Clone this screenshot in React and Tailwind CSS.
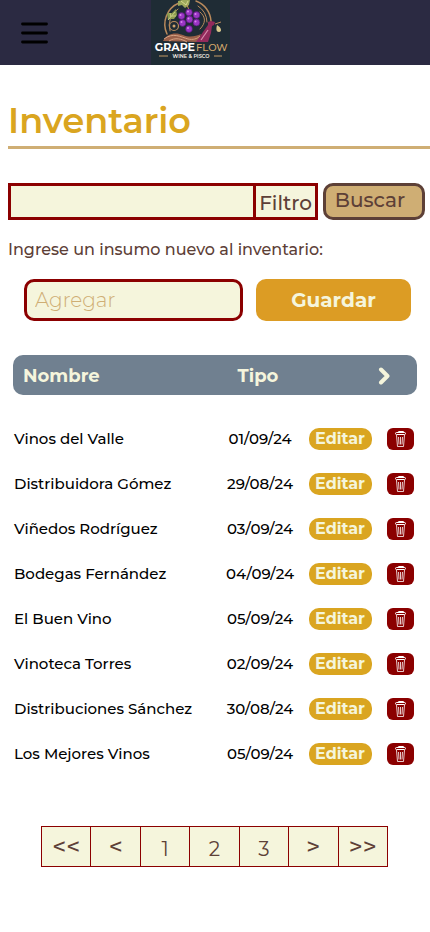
import React from "react";

const rows = [
  { name: "Vinos del Valle", date: "01/09/24" },
  { name: "Distribuidora Gómez", date: "29/08/24" },
  { name: "Viñedos Rodríguez", date: "03/09/24" },
  { name: "Bodegas Fernández", date: "04/09/24" },
  { name: "El Buen Vino", date: "05/09/24" },
  { name: "Vinoteca Torres", date: "02/09/24" },
  { name: "Distribuciones Sánchez", date: "30/08/24" },
  { name: "Los Mejores Vinos", date: "05/09/24" },
];

const pages = [
  { text: "<<", label: "Primera página", style: "text-2xl font-medium" },
  { text: "<", label: "Página anterior", style: "text-2xl font-medium" },
  { text: "1", label: "Página 1", style: "pt-1 text-xl font-normal" },
  { text: "2", label: "Página 2", style: "pt-1 text-xl font-normal" },
  { text: "3", label: "Página 3", style: "pt-1 text-xl font-normal" },
  { text: ">", label: "Página siguiente", style: "text-2xl font-medium" },
  { text: ">>", label: "Última página", style: "text-2xl font-medium" },
];

const grapes = [
  [30.5, 16], [38, 12.5], [45.5, 15], [31.5, 23], [38.5, 19.5],
  [45.5, 22.5], [38, 29],
];

function Logo() {
  return (
    <svg viewBox="0 0 79 65" className="h-[65px] w-[79px]" role="img" aria-label="GrapeFlow Wine & Pisco">
      <rect width="79" height="65" fill="#1f2c35" />
      <g fill="none" stroke="#b98a5c" strokeLinecap="round">
        <path d="M16 34A23 23 0 0 1 28 3M45 1A23 23 0 0 1 60 21" strokeWidth="1.5" />
        <path d="M19 31A19 19 0 0 1 27 9M47 6A20 20 0 0 1 56 22M49 12C55 17 55 23 49 29" strokeWidth="1" />
        <circle cx="23" cy="26" r="4.5" strokeWidth="1.2" />
      </g>
      <circle cx="23" cy="26" r="1.5" fill="#d0a26d" />
      <path d="M12 41C16 33 25 32 32 35C39 38 45 36 50 34L47 42Z" fill="#9a6049" />
      <path d="M13 39C22 32 30 37 37 39C42 40 46 39 49 36M18 41C24 37 31 39 36 42" fill="none" stroke="#d5a283" strokeWidth="1" />
      <path d="M27 1L31 0H39L38 5L34 8L31 5L27 6Z" fill="#9ca85b" />
      <path d="M30 1L35 5L37 1" fill="none" stroke="#d7d790" />
      <path d="M17 20L16 13L21 13L25 9L26 15L23 19L19 19Z" fill="#8c9c50" />
      <path d="M17 20L24 12M20 17L19 13M21 16H25" fill="none" stroke="#d7d790" strokeWidth="0.8" />
      <path d="M38 10L36 5" stroke="#c79457" />
      {grapes.map(([x, y]) => (
        <g key={`${x}-${y}`}>
          <circle cx={x} cy={y} r="3.4" fill="#9a35c4" stroke="#49166a" strokeWidth="0.6" />
          <circle cx={x - 1} cy={y - 1} r="1" fill="#d884ee" />
        </g>
      ))}
      <path d="M45 42L52 32L57 25L57 22L60 21L64 22L63 25L61 26L60 33L57 42Z" fill="#922b5c" />
      <path d="M50 40L57 30" stroke="#d98eae" strokeWidth="1.2" />
      <path d="M64 24L70 22" stroke="#b98a5c" />
      <path d="M66 25C71 28 71 32 68 32C65 32 65 29 66 25Z" fill="#d9c98d" />
      <text x="44" y="51" textAnchor="end" fill="#ffffff" fontSize="11" fontWeight="700">GRAPE</text>
      <text x="45" y="51" fill="#d5aa6c" fontSize="10" fontWeight="500">FLOW</text>
      <text x="40" y="58" textAnchor="middle" fill="#f5efe5" fontSize="5" fontWeight="600">WINE &amp; PISCO</text>
      <path d="M8 56H17M63 56H71" stroke="#c39a66" />
    </svg>
  );
}

function TrashIcon() {
  return (
    <svg viewBox="0 0 12 16" className="h-4 w-3" fill="none" stroke="#ffffff" strokeWidth="1" aria-hidden="true">
      <path d="M3 1.500Q3 0.500 4 0.500H8Q9 0.500 9 1.500" />
      <rect x="0.500" y="1.500" width="10" height="2" rx="1" />
      <path d="M1.500 4L2.500 15.500H8.500L9.500 4" strokeWidth="0.8" />
      <path d="M3.500 6L4 13.500M5.500 6V13.500M7.500 6L7 13.500" strokeWidth="0.8" />
    </svg>
  );
}

export default function App() {
  return (
    <div className="min-h-screen bg-white font-[Montserrat,Inter,sans-serif] text-black">
      <header className="flex h-[65px] bg-[#2b2a42]">
        <div className="flex w-[35%] items-center pl-[21px]">
          <button type="button" aria-label="Abrir menú">
            <svg viewBox="0 0 27 22" className="h-[22px] w-[27px]" stroke="#000000" strokeWidth="2.8" strokeLinecap="round" aria-hidden="true">
              <path d="M1.500 2H25.500M1.500 11H25.500M1.500 20H25.500" />
            </svg>
          </button>
        </div>
        <Logo />
      </header>

      <main>
        <h1 className="ml-2 mt-8 border-b-3 border-[#cfae74] pb-px text-[35px] leading-[48px] font-semibold text-[#daa520]">
          Inventario
        </h1>

        <form className="mt-[34px] flex gap-[5px] pr-[5px] pl-2" onSubmit={(e) => e.preventDefault()}>
          <div className="flex h-[37px] min-w-0 flex-1 border-3 border-[#8b0000] bg-[#f5f5dc]">
            <input type="search" aria-label="Buscar insumo" className="min-w-0 flex-1 px-2 text-xl text-[#5d4037] outline-none" />
            <button type="button" className="w-[62px] border-l-3 border-[#8b0000] pt-0.5 text-xl font-medium text-[#5d4037]">Filtro</button>
          </div>
          <button type="submit" className="h-[37px] w-[102px] rounded-[10px] border-3 border-[#5d4037] bg-[#cfae74] pr-2 pb-1 text-xl font-medium text-[#5d4037]">
            Buscar
          </button>
        </form>

        <form onSubmit={(e) => e.preventDefault()}>
          <label htmlFor="insumo" className="mt-[18px] block pl-2 text-base font-medium text-[#5d4037]">
            Ingrese un insumo nuevo al inventario:
          </label>
          <div className="mt-[17px] flex gap-[13px] pr-[19px] pl-6">
            <input
              id="insumo"
              type="text"
              placeholder="Agregar"
              className="h-[42px] min-w-0 flex-1 rounded-[10px] border-3 border-[#8b0000] bg-[#f5f5dc] px-2 text-xl font-light text-[#5d4037] outline-none placeholder:text-[#cfae74]"
            />
            <button type="submit" className="h-[42px] w-[155px] rounded-[10px] bg-[#dc9c24] text-xl font-bold text-[#f5f5dc]">
              Guardar
            </button>
          </div>
        </form>

        <div className="mt-[34px] px-[13px]">
          <table className="w-full table-fixed">
            <colgroup>
              <col />
              <col className="w-[72px]" />
              <col className="w-[88px]" />
              <col className="w-[33px]" />
            </colgroup>
            <thead>
              <tr className="h-10 text-lg text-[#f5f5dc]">
                <th scope="col" className="rounded-l-[10px] bg-[#708090] pt-0.5 pl-[10px] text-left font-bold">Nombre</th>
                <th scope="col" className="bg-[#708090] pt-0.5 pr-1 text-center font-bold">Tipo</th>
                <th scope="col" colSpan={2} className="rounded-r-[10px] bg-[#708090] pt-0.5 pr-[26px]">
                  <button type="button" aria-label="Más columnas" className="ml-auto block">
                    <svg viewBox="0 0 13 18" className="h-[18px] w-[13px]" fill="none" stroke="#f5f5dc" strokeWidth="4" strokeLinecap="round" strokeLinejoin="round" aria-hidden="true">
                      <path d="M3 2.500L9.500 9L3 15.500" />
                    </svg>
                  </button>
                </th>
              </tr>
            </thead>
            <tbody className="before:block before:h-[21px] before:content-['']">
              {rows.map((row) => (
                <tr key={row.name} className="h-[45px] text-[15px] font-medium">
                  <td className="pt-0.5 pl-px">{row.name}</td>
                  <td className="pt-0.5 text-center">{row.date}</td>
                  <td>
                    <button type="button" className="mx-auto block h-[22px] w-[63px] rounded-[10px] bg-[#daa520] text-base leading-[22px] font-bold text-[#f5f5dc]">
                      Editar
                    </button>
                  </td>
                  <td>
                    <button type="button" aria-label={`Eliminar ${row.name}`} className="mx-auto flex h-[22px] w-[27px] items-center justify-center rounded-md bg-[#8b0000]">
                      <TrashIcon />
                    </button>
                  </td>
                </tr>
              ))}
            </tbody>
          </table>
        </div>

        <nav aria-label="Paginación" className="mt-[50px] pr-[42px] pl-[41px]">
          <ul className="flex h-[41px] border border-[#8b0000] bg-[#f5f5dc] text-[#5d4037]">
            {pages.map((page) => (
              <li key={page.label} className="flex-1 border-l border-[#8b0000] first:border-l-0">
                <button type="button" aria-label={page.label} className={`h-full w-full ${page.style}`}>
                  {page.text}
                </button>
              </li>
            ))}
          </ul>
        </nav>
      </main>
    </div>
  );
}
